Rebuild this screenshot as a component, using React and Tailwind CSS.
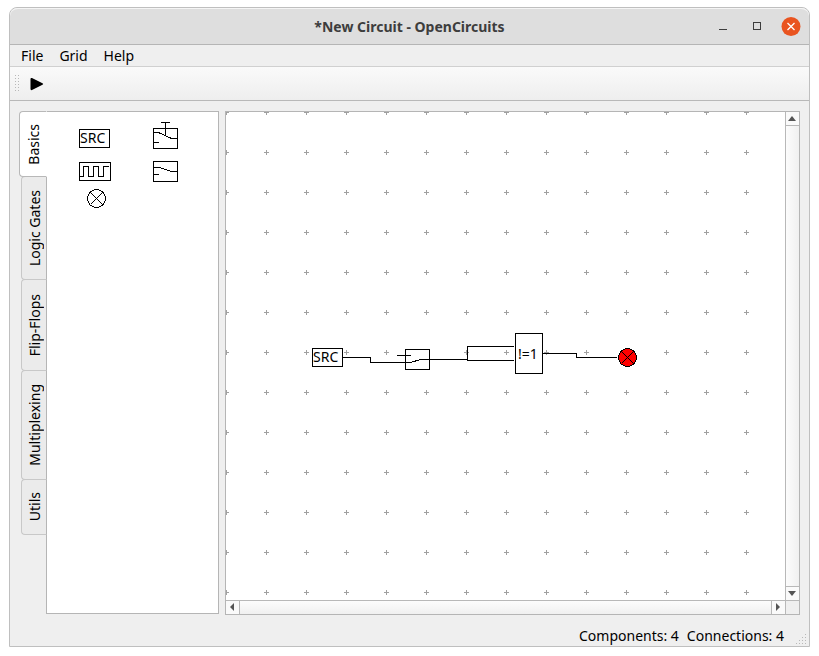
import React, { useState } from "react";

const TABS = [
  { label: "Basics", height: "h-[66px]" },
  { label: "Logic Gates", height: "h-[104px]" },
  { label: "Flip-Flops", height: "h-[92px]" },
  { label: "Multiplexing", height: "h-[110px]" },
  { label: "Utils", height: "h-[56px]" },
];

const range = (n) => Array.from({ length: n }, (_, i) => i);

function Drawing({ width, height, label, children }) {
  return (
    <svg width={width} height={height} role="img" aria-label={label} fill="none" stroke="#000" shapeRendering="crispEdges">
      {children}
    </svg>
  );
}

function SourceIcon() {
  return (
    <Drawing width={31} height={32} label="Source">
      <rect x="0.5" y="7.5" width="30" height="18" />
      <text x="1" y="21" fontSize="14" fill="#000" stroke="none">SRC</text>
    </Drawing>
  );
}

function PushButtonIcon() {
  return (
    <Drawing width={25} height={32} label="Button">
      <rect x="0.5" y="6.5" width="24" height="20" />
      <path d="M8 0.5H17M12.5 0V13M1 10.5H5.5L18.5 16.5H24M1 20.5H6" />
    </Drawing>
  );
}

function ClockIcon() {
  return (
    <Drawing width={33} height={21} label="Clock">
      <rect x="1.5" y="1.5" width="31" height="18" />
      <path d="M2 15.5H5.5V5.5H10.5V15.5H15.5V5.5H20.5V15.5H25.5V5.5H31" />
    </Drawing>
  );
}

function SwitchIcon() {
  return (
    <Drawing width={25} height={21} label="Switch">
      <rect x="0.5" y="0.5" width="24" height="20" />
      <path d="M1 6.5H6L18.5 10.5H24M1 13.5H6" />
    </Drawing>
  );
}

function LampIcon() {
  return (
    <Drawing width={23} height={19} label="Lamp">
      <circle cx="13.5" cy="9.5" r="9" />
      <path d="M7.5 3.5L19.5 15.5M19.5 3.5L7.5 15.5" />
    </Drawing>
  );
}

const PALETTE = [SourceIcon, PushButtonIcon, ClockIcon, SwitchIcon, LampIcon];

function Circuit() {
  return (
    <svg className="block h-full w-full min-w-0" role="img" aria-label="Circuit" shapeRendering="crispEdges">
      <g stroke="#a0a0a0">
        {range(13).map((r) =>
          range(14).map((c) => (
            <path key={`${r}-${c}`} d={`M${c * 40 - 2} ${r * 40 + 0.5}h5M${c * 40 + 0.5} ${r * 40 - 2}v5`} />
          ))
        )}
      </g>
      <g fill="none" stroke="#000">
        <rect x="86.5" y="236.5" width="30" height="18" fill="#fff" />
        <rect x="179.5" y="237.5" width="24" height="20" fill="#fff" />
        <rect x="289.5" y="221.5" width="27" height="40" fill="#fff" />
        <path d="M117 245.5H144.5V250.5H184.5L194.5 247.5H241.5" />
        <path d="M171 243.5H185" />
        <path d="M288 234.5H241.5V248.5H288" />
        <path d="M317 241.5H350.5V245.5H391" />
        <circle cx="401.5" cy="245.5" r="9" fill="#f00" />
        <path d="M395.5 239.5L407.5 251.5M407.5 239.5L395.5 251.5" />
      </g>
      <g fontSize="14" fill="#000">
        <text x="87" y="250">SRC</text>
        <text x="302" y="247" textAnchor="middle">!=1</text>
      </g>
    </svg>
  );
}

const ARROWS = {
  up: "M2 9L6 4L10 9Z",
  down: "M2 4L6 9L10 4Z",
  left: "M8 2L4 6L8 10Z",
  right: "M4 2L8 6L4 10Z",
};

function ScrollArrow({ direction }) {
  return (
    <button type="button" aria-label={`Scroll ${direction}`} className="size-[13px] shrink-0 bg-[#fafafa]">
      <svg width="13" height="13" fill="#555">
        <path d={ARROWS[direction]} />
      </svg>
    </button>
  );
}

export default function App() {
  const [active, setActive] = useState("Basics");

  return (
    <div className="flex h-screen flex-col bg-white px-[9px] pt-[7px] pb-[9px] font-['Noto_Sans',sans-serif] text-sm text-black">
      <div className="flex min-h-0 flex-1 flex-col rounded-t-lg border border-[#bfbfbf] bg-[#efefef]">
        <header className="grid h-[37px] shrink-0 grid-cols-[1fr_auto_1fr] items-center rounded-t-lg border-t border-b border-t-[#f5f5f5] border-b-[#b5b5b5] bg-[#dedede] px-2">
          <h1 className="col-start-2 text-sm font-bold text-[#3d3d3d]">*New Circuit - OpenCircuits</h1>
          <div className="flex justify-end gap-3.5">
            <button type="button" aria-label="Minimize" className="size-5">
              <svg width="20" height="20" shapeRendering="crispEdges">
                <path d="M6 12.5h8" stroke="#3d3d3d" />
              </svg>
            </button>
            <button type="button" aria-label="Maximize" className="size-5">
              <svg width="20" height="20" shapeRendering="crispEdges">
                <rect x="6.5" y="5.5" width="7" height="7" fill="none" stroke="#3d3d3d" />
              </svg>
            </button>
            <button type="button" aria-label="Close" className="size-5">
              <svg width="20" height="20">
                <circle cx="10" cy="9.500" r="9.500" fill="#e95420" />
                <path d="M6.500 6l7 7M13.500 6l-7 7" stroke="#fff" strokeWidth="1.3" />
              </svg>
            </button>
          </div>
        </header>

        <nav className="flex h-[22px] shrink-0 items-center gap-4 border-b border-[#d0d0d0] px-[11px]">
          <button type="button">File</button>
          <button type="button">Grid</button>
          <button type="button">Help</button>
        </nav>

        <div className="flex h-[34px] shrink-0 items-center gap-2.5 border-b border-[#b8b8b8] bg-linear-to-b from-[#fafafa] to-[#eeeeee] pl-[5px]">
          <svg width="5" height="17" fill="#b8b8b8" shapeRendering="crispEdges">
            {range(6).map((i) => (
              <path key={i} d={`M0 ${i * 3}h1v1h-1zM3 ${i * 3}h1v1h-1z`} />
            ))}
          </svg>
          <button type="button" aria-label="Run" className="size-4">
            <svg width="16" height="16">
              <path d="M0.5 3Q0.5 1.5 2 2L12.500 7.300Q14 8 12.500 8.700L2 14Q0.5 14.500 0.5 13Z" />
            </svg>
          </button>
        </div>

        <main className="flex min-h-0 flex-1 gap-1.5 px-[9px] pt-2.5">
          <section className="flex w-[200px] shrink-0 pb-px">
            <div role="tablist" aria-orientation="vertical" className="z-10 -mr-px flex w-7 shrink-0 flex-col items-end">
              {TABS.map(({ label, height }) => (
                <button
                  key={label}
                  type="button"
                  role="tab"
                  aria-selected={active === label}
                  onClick={() => setActive(label)}
                  className={`-mb-px flex items-center justify-center rounded-l-sm border pl-0.5 ${height} ${
                    active === label
                      ? "z-10 w-7 border-[#b8b8b8] border-r-white bg-white"
                      : "w-[26px] border-[#c8c8c8] border-r-[#b5b5b5] bg-[#ebebeb]"
                  }`}
                >
                  <span className="rotate-180 whitespace-nowrap [writing-mode:vertical-rl]">{label}</span>
                </button>
              ))}
            </div>
            <div role="tabpanel" aria-label={active} className="min-w-0 flex-1 border border-[#b5b5b5] bg-white">
              <div className="grid grid-cols-2 gap-y-[7px] pt-2.5 pr-[17px] pl-3">
                {PALETTE.map((Icon, i) => (
                  <button key={i} type="button" className="flex justify-center">
                    <Icon />
                  </button>
                ))}
              </div>
            </div>
          </section>

          <section className="grid min-w-0 flex-1 grid-cols-[minmax(0,1fr)_14px] grid-rows-[minmax(0,1fr)_14px] border border-[#b5b5b5] bg-white">
            <Circuit />
            <div className="flex flex-col border-l border-[#b8b8b8]">
              <ScrollArrow direction="up" />
              <div className="flex-1 border-y border-[#b8b8b8] bg-linear-to-r from-[#fcfcfc] to-[#f0f0f0]" />
              <ScrollArrow direction="down" />
            </div>
            <div className="flex border-t border-[#b8b8b8]">
              <ScrollArrow direction="left" />
              <div className="flex-1 border-x border-[#b8b8b8] bg-linear-to-b from-[#fcfcfc] to-[#f0f0f0]" />
              <ScrollArrow direction="right" />
            </div>
            <div className="border-t border-l border-[#b8b8b8] bg-[#efefef]" />
          </section>
        </main>

        <footer className="flex h-[31px] shrink-0 items-end justify-end gap-2 pr-0.5">
          <p>Components: 4</p>
          <p>Connections: 4</p>
          <svg className="mb-px ml-1" width="11" height="11" fill="#b8b8b8" shapeRendering="crispEdges">
            {range(4).map((r) =>
              range(r + 1).map((c) => <rect key={`${r}-${c}`} x={9 - c * 3} y={r * 3} width="1" height="1" />)
            )}
          </svg>
        </footer>
      </div>
    </div>
  );
}
